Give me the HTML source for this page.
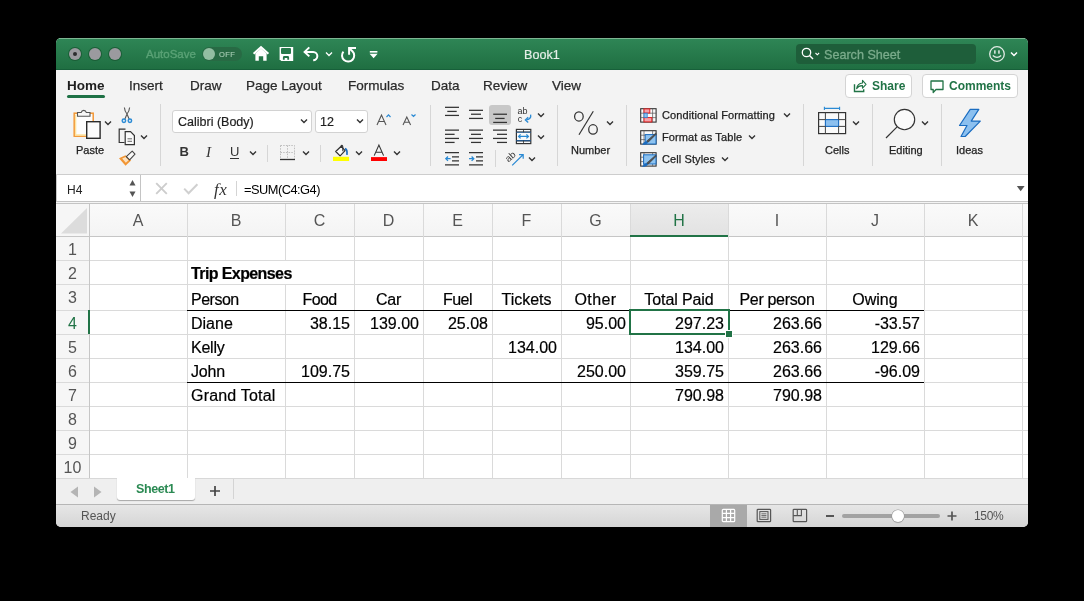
<!DOCTYPE html>
<html><head><meta charset="utf-8"><style>
*{margin:0;padding:0;box-sizing:border-box}
html,body{width:1084px;height:601px;background:#000;overflow:hidden;font-family:"Liberation Sans",sans-serif}
div,svg{position:absolute}
.t{white-space:nowrap;line-height:1}
.tab{top:79px;font-size:13.5px;color:#2a2a2a;-webkit-text-stroke:.25px #2a2a2a;white-space:nowrap;line-height:1}
.sep{width:1px;background:#d6d6d6}
.rt{font-size:11px;color:#222;-webkit-text-stroke:.25px #222;white-space:nowrap;line-height:1}
.hl{height:1px;background:#dadada}
.vl{width:1px;background:#dadada}
.ch{font-size:16px;color:#555;line-height:1;text-align:center;white-space:nowrap}
.rh{left:56px;width:33px;font-size:16px;color:#555;line-height:1;text-align:center}
.c{font-size:16px;color:#000;-webkit-text-stroke:.2px #000;line-height:1;white-space:nowrap}
.r{text-align:right}
.ctr{text-align:center}
</style></head><body>
<div id="root" style="left:0;top:0;width:1084px;height:601px;will-change:transform">
<div style="left:56px;top:38px;width:972px;height:489px;border-radius:5px;overflow:hidden;background:#f3f3f3"></div>
<div style="left:56px;top:38px;width:972px;height:32px;border-radius:5px 5px 0 0;background:linear-gradient(#2f8656,#1f6e41)"></div>
<div style="left:59px;top:38px;width:966px;height:1px;background:#7db592"></div>
<div style="left:56px;top:69px;width:972px;height:1px;background:#17603a"></div>
<div style="left:69px;top:48px;width:12px;height:12px;border-radius:50%;background:#9b9a9f;box-shadow:0 0 0 1px #1b5e37"></div>
<div style="left:89px;top:48px;width:12px;height:12px;border-radius:50%;background:#9b9a9f;box-shadow:0 0 0 1px #1b5e37"></div>
<div style="left:109px;top:48px;width:12px;height:12px;border-radius:50%;background:#9b9a9f;box-shadow:0 0 0 1px #1b5e37"></div>
<div style="left:73px;top:52px;width:4px;height:4px;border-radius:50%;background:#2c2c2e"></div>
<div class="t" style="left:146px;top:49px;font-size:11.5px;color:#5aa276;-webkit-text-stroke:.35px #5aa276">AutoSave</div>
<div style="left:202px;top:47px;width:40px;height:14px;border-radius:7px;background:#286a44"></div>
<div style="left:203px;top:48px;width:12px;height:12px;border-radius:50%;background:#93bea2"></div>
<div class="t" style="left:219px;top:51px;font-size:7.5px;color:#a3c9b0;letter-spacing:.45px;-webkit-text-stroke:.15px #a3c9b0">OFF</div>
<svg style="left:252px;top:45px;" width="19" height="17" viewBox="0 0 19 17"><path d="M1.6 8.8 L9 2.2 L16.4 8.8" fill="none" stroke="#fff" stroke-width="2.1"/><path d="M3.4 8.4 L9 3.6 L14.6 8.4 V15.8 H11.2 V11.2 H6.8 V15.8 H3.4 Z" fill="#fff"/></svg>
<svg style="left:279px;top:46px;" width="15" height="16" viewBox="0 0 15 16"><path d="M0.6 0.9 H14.2 V15 H2.3 L0.6 13.3 Z" fill="#fff"/><rect x="2" y="2" width="10" height="5.9" rx="1" fill="#287b4c"/><path d="M3.9 13.8 V11.4 Q3.9 10 5.3 10 H8.7 Q10.1 10 10.1 11.4 V13.8 H8.3 V12 H5.7 V13.8 Z" fill="#257549"/></svg>
<svg style="left:303px;top:46px;" width="17" height="16" viewBox="0 0 17 16"><path d="M1.8 5.9 H10.2 A4.15 4.15 0 0 1 10.2 14.2" fill="none" stroke="#fff" stroke-width="2"/><path d="M6.3 1.4 L1.6 5.9 L6.3 10.4" fill="none" stroke="#fff" stroke-width="2"/></svg>
<svg style="left:325px;top:51px;" width="8" height="6" viewBox="0 0 8 6"><path d="M1 1.5 L4 4.5 L7 1.5" fill="none" stroke="#fff" stroke-width="1.3"/></svg>
<svg style="left:336px;top:43px;" width="22" height="22" viewBox="0 0 22 22"><path d="M7.43 8.58 A6.1 6.1 0 1 0 16.41 8.19 L13.2 5.2" fill="none" stroke="#fff" stroke-width="2"/><path d="M20 5.1 H13.1 V11.8" fill="none" stroke="#fff" stroke-width="2"/></svg>
<svg style="left:369px;top:50px;" width="9" height="9" viewBox="0 0 9 9"><rect x="0.8" y="1" width="7.6" height="1.6" fill="#fff"/><path d="M0.6 3.8 H8.6 L4.6 8.2 Z" fill="#fff"/></svg>
<div class="t" style="left:524px;top:48.5px;font-size:12.6px;color:#e6efe9;-webkit-text-stroke:.2px #e6efe9">Book1</div>
<div style="left:796px;top:44px;width:180px;height:20px;border-radius:4px;background:#1e5e3a"></div>
<svg style="left:801px;top:47px;" width="19" height="13" viewBox="0 0 19 13"><circle cx="5.5" cy="5.5" r="4.2" fill="none" stroke="#fff" stroke-width="1.3"/><path d="M8.5 8.5 L12 12" stroke="#fff" stroke-width="1.4"/><path d="M14.5 6 L16.3 7.8 L18.1 6" fill="none" stroke="#fff" stroke-width="1.1"/></svg>
<div class="t" style="left:824px;top:49px;font-size:12.6px;color:#7aab8b;-webkit-text-stroke:.3px #7aab8b">Search Sheet</div>
<svg style="left:988px;top:46px;" width="18" height="17" viewBox="0 0 18 17"><circle cx="9" cy="8" r="7.3" fill="none" stroke="#e2ebe5" stroke-width="1.3"/><rect x="6.1" y="4.3" width="1.5" height="3.4" fill="#e2ebe5"/><rect x="10.2" y="4.3" width="1.5" height="3.4" fill="#e2ebe5"/><path d="M4.8 9.6 Q9 13.2 13.2 9.6" fill="none" stroke="#e2ebe5" stroke-width="1.3"/></svg>
<svg style="left:1010px;top:51px;" width="8" height="6" viewBox="0 0 8 6"><path d="M1 1.5 L4 4.5 L7 1.5" fill="none" stroke="#fff" stroke-width="1.5"/></svg>
<div class="tab" style="left:67px;font-weight:bold;color:#1e1e1e;-webkit-text-stroke:0">Home</div>
<div style="left:67px;top:95px;width:38px;height:3px;border-radius:2px;background:#1e7145"></div>
<div class="tab" style="left:129px">Insert</div>
<div class="tab" style="left:190px">Draw</div>
<div class="tab" style="left:246px">Page Layout</div>
<div class="tab" style="left:348px">Formulas</div>
<div class="tab" style="left:431px">Data</div>
<div class="tab" style="left:483px">Review</div>
<div class="tab" style="left:552px">View</div>
<div style="left:845px;top:74px;width:67px;height:24px;border:1px solid #d4d4d4;border-radius:4px;background:#fff"></div>
<svg style="left:852px;top:78px;" width="16" height="16" viewBox="0 0 16 16"><path d="M2.5 6.2 V13.5 H11.7 V11.3" fill="none" stroke="#217346" stroke-width="1.4"/><path d="M4.6 10.6 Q5.4 5.2 10.5 5 V2.4 L14 6.3 L10.5 10.2 V7.6 Q6.6 7.4 4.6 10.6 Z" fill="none" stroke="#217346" stroke-width="1.1" stroke-linejoin="round"/></svg>
<div class="t" style="left:872px;top:80px;font-size:12px;font-weight:bold;color:#217346">Share</div>
<div style="left:922px;top:74px;width:96px;height:24px;border:1px solid #d4d4d4;border-radius:4px;background:#fff"></div>
<svg style="left:930px;top:80px;" width="14" height="14" viewBox="0 0 14 14"><path d="M1 1 H13 V9.5 H6 L3.2 12.5 V9.5 H1 Z" fill="none" stroke="#217346" stroke-width="1.3" stroke-linejoin="round"/></svg>
<div class="t" style="left:949px;top:80px;font-size:12px;font-weight:bold;color:#217346">Comments</div>
<div class="sep" style="left:160px;top:104px;height:62px"></div>
<div class="sep" style="left:430px;top:105px;height:61px"></div>
<div class="sep" style="left:557px;top:105px;height:61px"></div>
<div class="sep" style="left:626px;top:105px;height:61px"></div>
<div class="sep" style="left:803px;top:104px;height:62px"></div>
<div class="sep" style="left:872px;top:104px;height:62px"></div>
<div class="sep" style="left:941px;top:104px;height:62px"></div>
<div class="sep" style="left:267px;top:145px;height:17px"></div>
<div class="sep" style="left:320px;top:145px;height:17px"></div>
<div class="sep" style="left:495px;top:150px;height:17px"></div>
<div class="rt" style="left:76px;top:144.5px">Paste</div>
<div class="rt" style="left:571px;top:144.5px">Number</div>
<div class="rt" style="left:825px;top:144.5px">Cells</div>
<div class="rt" style="left:889px;top:144.5px">Editing</div>
<div class="rt" style="left:956px;top:144.5px">Ideas</div>
<div class="rt" style="left:662px;top:110px;letter-spacing:.1px">Conditional Formatting</div>
<div class="rt" style="left:662px;top:132px;letter-spacing:.1px">Format as Table</div>
<div class="rt" style="left:662px;top:154px;letter-spacing:.1px">Cell Styles</div>
<svg style="left:104px;top:120px;" width="8" height="6" viewBox="0 0 8 6"><path d="M1 1.5 L4 4.5 L7 1.5" fill="none" stroke="#333" stroke-width="1.4"/></svg>
<svg style="left:140px;top:134px;" width="8" height="6" viewBox="0 0 8 6"><path d="M1 1.5 L4 4.5 L7 1.5" fill="none" stroke="#333" stroke-width="1.4"/></svg>
<svg style="left:249px;top:150px;" width="8" height="6" viewBox="0 0 8 6"><path d="M1 1.5 L4 4.5 L7 1.5" fill="none" stroke="#333" stroke-width="1.4"/></svg>
<svg style="left:302px;top:150px;" width="8" height="6" viewBox="0 0 8 6"><path d="M1 1.5 L4 4.5 L7 1.5" fill="none" stroke="#333" stroke-width="1.4"/></svg>
<svg style="left:355px;top:150px;" width="8" height="6" viewBox="0 0 8 6"><path d="M1 1.5 L4 4.5 L7 1.5" fill="none" stroke="#333" stroke-width="1.4"/></svg>
<svg style="left:393px;top:150px;" width="8" height="6" viewBox="0 0 8 6"><path d="M1 1.5 L4 4.5 L7 1.5" fill="none" stroke="#333" stroke-width="1.4"/></svg>
<svg style="left:537px;top:112px;" width="8" height="6" viewBox="0 0 8 6"><path d="M1 1.5 L4 4.5 L7 1.5" fill="none" stroke="#333" stroke-width="1.4"/></svg>
<svg style="left:537px;top:134px;" width="8" height="6" viewBox="0 0 8 6"><path d="M1 1.5 L4 4.5 L7 1.5" fill="none" stroke="#333" stroke-width="1.4"/></svg>
<svg style="left:528px;top:156px;" width="8" height="6" viewBox="0 0 8 6"><path d="M1 1.5 L4 4.5 L7 1.5" fill="none" stroke="#333" stroke-width="1.4"/></svg>
<svg style="left:606px;top:120px;" width="8" height="6" viewBox="0 0 8 6"><path d="M1 1.5 L4 4.5 L7 1.5" fill="none" stroke="#333" stroke-width="1.4"/></svg>
<svg style="left:783px;top:112px;" width="8" height="6" viewBox="0 0 8 6"><path d="M1 1.5 L4 4.5 L7 1.5" fill="none" stroke="#333" stroke-width="1.4"/></svg>
<svg style="left:748px;top:134px;" width="8" height="6" viewBox="0 0 8 6"><path d="M1 1.5 L4 4.5 L7 1.5" fill="none" stroke="#333" stroke-width="1.4"/></svg>
<svg style="left:721px;top:156px;" width="8" height="6" viewBox="0 0 8 6"><path d="M1 1.5 L4 4.5 L7 1.5" fill="none" stroke="#333" stroke-width="1.4"/></svg>
<svg style="left:852px;top:120px;" width="8" height="6" viewBox="0 0 8 6"><path d="M1 1.5 L4 4.5 L7 1.5" fill="none" stroke="#333" stroke-width="1.4"/></svg>
<svg style="left:921px;top:120px;" width="8" height="6" viewBox="0 0 8 6"><path d="M1 1.5 L4 4.5 L7 1.5" fill="none" stroke="#333" stroke-width="1.4"/></svg>
<svg style="left:72px;top:108px;" width="30" height="32" viewBox="0 0 30 32"><rect x="2.2" y="5.2" width="19" height="23" fill="#fdfdfd" stroke="#f29634" stroke-width="1.5"/><path d="M3.6 6.6 V27 H19.8" fill="none" stroke="#fde3a0" stroke-width="1.4"/><path d="M5.5 8.3 V4.5 H9.2 A2.6 2.6 0 0 1 14.3 4.5 H18 V8.3 Z" fill="#f7f7f7" stroke="#555" stroke-width="1.1"/><rect x="14.7" y="13.7" width="13.4" height="16.6" fill="#fbfbfb" stroke="#2a2a2a" stroke-width="1.4"/></svg>
<svg style="left:120px;top:106px;" width="14" height="18" viewBox="0 0 14 18"><path d="M4.4 1.5 Q4.6 5 7 8 L9.2 13.2 M9.6 1.5 Q9.4 5 7 8 L4.8 13.2" fill="none" stroke="#555" stroke-width="1.1"/><circle cx="3.9" cy="14.8" r="1.75" fill="#dbe9f6" stroke="#2a8ad4" stroke-width="1.4"/><circle cx="9.9" cy="14.8" r="1.75" fill="#dbe9f6" stroke="#2a8ad4" stroke-width="1.4"/></svg>
<svg style="left:118px;top:128px;" width="18" height="18" viewBox="0 0 18 18"><path d="M7.5 1.2 H1.2 V14.5 H6.5" fill="none" stroke="#333" stroke-width="1.2"/><path d="M7.2 3.6 H12.5 L16.4 7.5 V16.6 H7.2 Z" fill="#fbfbfb" stroke="#333" stroke-width="1.2"/><path d="M9.5 10.8 H14 M9.5 13.3 H14" stroke="#555" stroke-width="0.9"/></svg>
<svg style="left:118px;top:150px;" width="18" height="17" viewBox="0 0 18 17"><path d="M1 8.3 L7.5 5.3 L13 10.6 L7.5 15.8 Z" fill="#f29634"/><path d="M4.2 8.6 L7.6 7 L10.6 10.2 L7.8 12.8 Z" fill="#fce2c0"/><path d="M8.3 6.6 L14.2 1.2 L17 4.2 L11.6 9.8 Z" fill="#fafafa" stroke="#444" stroke-width="1.1" stroke-linejoin="round"/></svg>
<div style="left:172px;top:110px;width:140px;height:23px;border:1px solid #d2d2d2;border-radius:3px;background:#fff"></div>
<div class="t" style="left:178px;top:116px;font-size:12.5px;color:#1e1e1e;-webkit-text-stroke:.2px #1e1e1e">Calibri (Body)</div>
<div style="left:315px;top:110px;width:53px;height:23px;border:1px solid #d2d2d2;border-radius:3px;background:#fff"></div>
<div class="t" style="left:320px;top:116px;font-size:12.5px;color:#1e1e1e;-webkit-text-stroke:.2px #1e1e1e">12</div>
<svg style="left:300px;top:118px;" width="8" height="6" viewBox="0 0 8 6"><path d="M1 1.5 L4 4.5 L7 1.5" fill="none" stroke="#333" stroke-width="1.4"/></svg>
<svg style="left:356px;top:118px;" width="8" height="6" viewBox="0 0 8 6"><path d="M1 1.5 L4 4.5 L7 1.5" fill="none" stroke="#333" stroke-width="1.4"/></svg>
<div class="t" style="left:179.5px;top:145px;font-size:13px;font-weight:bold;color:#333">B</div>
<div class="t" style="left:206px;top:145px;font-size:15px;font-style:italic;color:#333;font-family:'Liberation Serif',serif">I</div>
<div class="t" style="left:230px;top:145px;font-size:13px;color:#333">U</div>
<div style="left:230px;top:158px;width:9px;height:1px;background:#333"></div>
<svg style="left:279px;top:144px;" width="17" height="17" viewBox="0 0 17 17"><path d="M1.5 1.5 H15.5 V15.5 M1.5 1.5 V15.5 M8.5 1.5 V15.5 M1.5 8.5 H15.5" fill="none" stroke="#b0b0b0" stroke-width="0.8" stroke-dasharray="1.5 1.2"/><path d="M1 15.5 H16" stroke="#333" stroke-width="1.3"/></svg>
<svg style="left:332px;top:143px;" width="18" height="19" viewBox="0 0 18 19"><path d="M3.7 8.5 L9.2 3.2 L13.1 7.6 L8.1 12.9 Z" fill="#fafafa" stroke="#333" stroke-width="1.2" stroke-linejoin="round"/><path d="M9 3.3 Q9.9 1.4 10.7 3.2 L10.9 8.2" fill="none" stroke="#333" stroke-width="1.1"/><path d="M13 5.6 Q15.6 6.4 14.9 11.8" fill="none" stroke="#1a6cc0" stroke-width="1.7"/><rect x="1" y="13.8" width="16.1" height="4.2" fill="#ffff00"/></svg>
<svg style="left:370px;top:143px;" width="18" height="19" viewBox="0 0 18 19"><path d="M4.2 12.6 L8.9 2 L13.6 12.6 M5.7 9.3 H12.1" fill="none" stroke="#333" stroke-width="1.1"/><rect x="1" y="14.1" width="16" height="3.9" fill="#ff0000"/></svg>
<svg style="left:376px;top:113px;" width="16" height="13" viewBox="0 0 16 13"><path d="M1 12 L5.5 2 L10 12 M2.8 8.5 H8.2" fill="none" stroke="#555" stroke-width="1.1"/><path d="M10.5 4 L12.5 1.8 L14.5 4" fill="none" stroke="#2a8ad4" stroke-width="1.2"/></svg>
<svg style="left:402px;top:113px;" width="16" height="13" viewBox="0 0 16 13"><path d="M1 12 L4.8 4 L8.6 12 M2.5 9.2 H7.1" fill="none" stroke="#555" stroke-width="1.1"/><path d="M9.5 1.5 L11.5 3.5 L13.5 1.5" fill="none" stroke="#2a8ad4" stroke-width="1.2"/></svg>
<svg style="left:445px;top:106px;" width="16" height="18" viewBox="0 0 16 18"><rect x="0" y="0.7" width="14" height="1.25" fill="#333"/><rect x="2.3" y="4.8" width="9.399999999999999" height="1.25" fill="#333"/><rect x="0" y="8.8" width="14" height="1.25" fill="#333"/></svg>
<div style="left:489px;top:105px;width:22px;height:20px;border-radius:3px;background:#c8c8c8"></div>
<svg style="left:469px;top:106px;" width="16" height="18" viewBox="0 0 16 18"><rect x="0" y="3.7" width="14" height="1.25" fill="#333"/><rect x="2" y="7.6" width="10" height="1.25" fill="#333"/><rect x="0" y="11.8" width="14" height="1.25" fill="#333"/></svg>
<svg style="left:493px;top:106px;" width="16" height="18" viewBox="0 0 16 18"><rect x="0.2" y="7.6" width="13.8" height="1.25" fill="#333"/><rect x="2.2" y="11.8" width="9.399999999999999" height="1.25" fill="#333"/><rect x="0.2" y="15.8" width="13.8" height="1.25" fill="#333"/></svg>
<svg style="left:445px;top:129px;" width="16" height="18" viewBox="0 0 16 18"><rect x="0" y="0.5" width="14" height="1.25" fill="#333"/><rect x="0" y="4.7" width="9.6" height="1.25" fill="#333"/><rect x="0" y="8.8" width="14" height="1.25" fill="#333"/><rect x="0" y="12.8" width="9.6" height="1.25" fill="#333"/></svg>
<svg style="left:469px;top:129px;" width="16" height="18" viewBox="0 0 16 18"><rect x="0" y="0.5" width="14" height="1.25" fill="#333"/><rect x="2" y="4.7" width="10" height="1.25" fill="#333"/><rect x="0" y="8.8" width="14" height="1.25" fill="#333"/><rect x="2" y="12.8" width="10" height="1.25" fill="#333"/></svg>
<svg style="left:493px;top:129px;" width="16" height="18" viewBox="0 0 16 18"><rect x="0" y="0.5" width="14" height="1.25" fill="#333"/><rect x="4" y="4.7" width="10" height="1.25" fill="#333"/><rect x="0" y="8.8" width="14" height="1.25" fill="#333"/><rect x="4" y="12.8" width="10" height="1.25" fill="#333"/></svg>
<svg style="left:517px;top:106px;" width="18" height="18" viewBox="0 0 18 18"><text x="0.5" y="8.3" font-size="9" fill="#333" font-family="Liberation Sans">ab</text><text x="0.8" y="15.8" font-size="9" fill="#333" font-family="Liberation Sans">c</text><path d="M13.6 8.6 Q14.6 12.8 9.6 13.8" fill="none" stroke="#2a8ad4" stroke-width="1.3"/><path d="M11.2 11.3 L8.4 13.9 L11.2 16.5" fill="none" stroke="#2a8ad4" stroke-width="1.3"/></svg>
<svg style="left:515px;top:128px;" width="17" height="17" viewBox="0 0 17 17"><rect x="1.4" y="1.4" width="14.4" height="14.2" fill="#fafafa" stroke="#333" stroke-width="1.2"/><path d="M1.4 4.3 H15.8 M1.4 12.6 H15.8" stroke="#1a6cc0" stroke-width="1.1"/><path d="M8.5 1.4 V4.3 M8.5 12.6 V15.6 M1.4 3.9 H15.8 M1.4 13 H15.8" stroke="#333" stroke-width="0.8"/><path d="M3.6 8.4 H13.4 M5.6 6.4 L3.6 8.4 L5.6 10.4 M11.4 6.4 L13.4 8.4 L11.4 10.4" fill="none" stroke="#2a8ad4" stroke-width="1.3"/></svg>
<svg style="left:445px;top:151px;" width="15" height="15" viewBox="0 0 15 15"><path d="M0 1.6 H14 M7 5.8 H14 M7 9.9 H14 M0 13.9 H14" stroke="#333" stroke-width="1.2"/><path d="M0.8 7.7 H5.6 M3 5.5 L0.8 7.7 L3 9.9" fill="none" stroke="#2a8ad4" stroke-width="1.3"/></svg>
<svg style="left:469px;top:151px;" width="15" height="15" viewBox="0 0 15 15"><path d="M0 1.6 H14 M7 5.8 H14 M7 9.9 H14 M0 13.9 H14" stroke="#333" stroke-width="1.2"/><path d="M0 7.7 H4.8 M2.6 5.5 L4.8 7.7 L2.6 9.9" fill="none" stroke="#2a8ad4" stroke-width="1.3"/></svg>
<svg style="left:505px;top:149px;" width="20" height="18" viewBox="0 0 20 18"><text x="0" y="0" font-size="9.5" fill="#333" font-family="Liberation Sans" transform="translate(3.6,13.5) rotate(-42)">ab</text><path d="M7.2 16.4 L18 5.8 M14 5.6 H18.2 V9.8" fill="none" stroke="#2a8ad4" stroke-width="1.2"/></svg>
<svg style="left:572px;top:110px;" width="28" height="26" viewBox="0 0 28 26"><ellipse cx="6.9" cy="6.4" rx="4.3" ry="4.6" fill="none" stroke="#333" stroke-width="1.25"/><ellipse cx="21" cy="19.4" rx="4.3" ry="4.7" fill="none" stroke="#333" stroke-width="1.25"/><path d="M21.3 1.3 L7 24.8" stroke="#333" stroke-width="1.2"/></svg>
<svg style="left:639.5px;top:107.5px;" width="17" height="15" viewBox="0 0 17 15"><rect x="0.7" y="0.7" width="15.4" height="13.4" fill="#fafafa" stroke="#333" stroke-width="1.1"/><path d="M0.7 5.2 H16.1 M0.7 9.6 H16.1 M4 0.7 V14.1 M12.6 0.7 V14.1" stroke="#555" stroke-width="0.7"/><rect x="4" y="0.9" width="5.8" height="4.1" fill="#f3a2aa" stroke="#e32222" stroke-width="1"/><rect x="4" y="9.6" width="7.8" height="4.3" fill="#f3a2aa" stroke="#e32222" stroke-width="1"/><rect x="4" y="5.2" width="3.2" height="4.4" fill="#8ec3f0" stroke="#2a7fd0" stroke-width="0.8"/></svg>
<svg style="left:639.5px;top:129.5px;" width="17" height="16" viewBox="0 0 17 16"><rect x="0.7" y="0.7" width="15.4" height="13.4" fill="#fafafa" stroke="#333" stroke-width="1.1"/><path d="M0.7 5.2 H16.1 M0.7 9.6 H16.1 M4 0.7 V14.1 M12.6 0.7 V14.1" stroke="#555" stroke-width="0.7"/><rect x="5.2" y="4.6" width="10.8" height="9.4" fill="#8ec3f0" stroke="#1a6cc0" stroke-width="1"/><path d="M6.6 11.2 L15.6 3.2 L16.4 4 L8 12.4 Z" fill="#555" stroke="#333" stroke-width="0.6"/><path d="M2.2 15 Q3 12 6.4 11 L8 12.6 Q7 14.8 2.2 15 Z" fill="#1a6cc0"/></svg>
<svg style="left:639.5px;top:151.5px;" width="17" height="16" viewBox="0 0 17 16"><rect x="0.7" y="0.7" width="15.4" height="13.4" fill="#fafafa" stroke="#333" stroke-width="1.1"/><path d="M0.7 5.2 H16.1 M0.7 9.6 H16.1 M4 0.7 V14.1 M12.6 0.7 V14.1" stroke="#555" stroke-width="0.7"/><rect x="3.6" y="2.8" width="12.4" height="9.2" fill="#8ec3f0" stroke="#1a6cc0" stroke-width="1"/><path d="M6.6 11.2 L15.6 3.2 L16.4 4 L8 12.4 Z" fill="#555" stroke="#333" stroke-width="0.6"/><path d="M2.2 15 Q3 12 6.4 11 L8 12.6 Q7 14.8 2.2 15 Z" fill="#1a6cc0"/></svg>
<svg style="left:817px;top:106px;" width="30" height="29" viewBox="0 0 30 29"><path d="M7.4 2.4 H22.6 M7.4 0.8 V4 M22.6 0.8 V4" stroke="#2a8ad4" stroke-width="1.1"/><rect x="1.6" y="6.6" width="27" height="21" fill="#fafafa" stroke="#333" stroke-width="1.2"/><rect x="8.4" y="13.6" width="13.2" height="6.8" fill="#8cc0ef" stroke="#1a6cc0" stroke-width="1.1"/><path d="M1.6 13.6 H8.4 M21.6 13.6 H28.6 M1.6 20.4 H8.4 M21.6 20.4 H28.6 M8.4 6.6 V13.6 M8.4 20.4 V27.6 M21.6 6.6 V13.6 M21.6 20.4 V27.6" stroke="#444" stroke-width="1"/></svg>
<svg style="left:884px;top:108px;" width="34" height="32" viewBox="0 0 34 32"><circle cx="20.5" cy="11.5" r="10.2" fill="#fafafa" stroke="#333" stroke-width="1.15"/><path d="M13.3 18.7 L2 30" stroke="#333" stroke-width="1.15"/></svg>
<svg style="left:958px;top:108px;" width="24" height="30" viewBox="0 0 24 30"><path d="M12.2 1.4 H20.8 L13.2 13.1 H22.3 L7.2 28.5 H3 L9 17.5 H1.5 Z" fill="#8cc0ef" stroke="#1a6cc0" stroke-width="1.2" stroke-linejoin="round"/></svg>
<div style="left:56px;top:174px;width:972px;height:1px;background:#cdcdcd"></div>
<div style="left:56px;top:175px;width:972px;height:26px;background:#fff"></div>
<div style="left:56px;top:201px;width:972px;height:1px;background:#c4c4c4"></div>
<div style="left:56px;top:202px;width:972px;height:1px;background:#f4f4f4"></div>
<div style="left:56px;top:203px;width:972px;height:1px;background:#c4c4c4"></div>
<div style="left:140px;top:175px;width:1px;height:26px;background:#c4c4c4"></div>
<div style="left:56px;top:175px;width:1px;height:26px;background:#c8c8c8"></div>
<div style="left:141px;top:175px;width:887px;height:26px;background:#fff"></div>
<div class="t" style="left:67px;top:184px;font-size:12px;color:#222">H4</div>
<svg style="left:129px;top:179px;" width="8" height="20" viewBox="0 0 8 20"><path d="M0.5 6.5 L3.5 1 L6.5 6.5 Z" fill="#555"/><path d="M0.5 12.5 L3.5 18 L6.5 12.5 Z" fill="#555"/></svg>
<svg style="left:155px;top:182px;" width="13" height="13" viewBox="0 0 13 13"><path d="M1.2 1.2 L11.8 11.8 M11.8 1.2 L1.2 11.8" stroke="#cdcdcd" stroke-width="1.9"/></svg>
<svg style="left:183px;top:183px;" width="16" height="12" viewBox="0 0 16 12"><path d="M1.2 5.6 L5.6 10.2 L14.4 1.2" fill="none" stroke="#d0d0d0" stroke-width="2"/></svg>
<div class="t" style="left:214px;top:180.5px;font-size:17px;font-style:italic;color:#333;letter-spacing:.6px;font-family:'Liberation Serif',serif">fx</div>
<div style="left:236px;top:181px;width:1px;height:15px;background:#d4d4d4"></div>
<div class="t" style="left:244px;top:184px;font-size:12.8px;letter-spacing:-.5px;color:#000">=SUM(C4:G4)</div>
<svg style="left:1016px;top:185px;" width="10" height="8" viewBox="0 0 10 8"><path d="M0.8 1 H8.6 L4.7 6.3 Z" fill="#555"/></svg>
<div style="left:56px;top:204px;width:972px;height:274px;background:#fff"></div>
<div style="left:89px;top:204px;width:939px;height:32px;background:linear-gradient(#fafafa,#f4f4f4)"></div>
<div style="left:56px;top:204px;width:33px;height:274px;background:#f6f6f6"></div>
<div style="left:630px;top:204px;width:98px;height:32px;background:linear-gradient(#ececec,#e2e2e2)"></div>
<svg style="left:61px;top:208px;" width="27" height="26" viewBox="0 0 27 26"><path d="M26 0 V25.5 H0 Z" fill="#dcdcdc"/></svg>
<div class="hl" style="left:56px;top:260px;width:972px"></div>
<div class="hl" style="left:56px;top:284px;width:972px"></div>
<div class="hl" style="left:56px;top:310px;width:972px"></div>
<div class="hl" style="left:56px;top:334px;width:972px"></div>
<div class="hl" style="left:56px;top:358px;width:972px"></div>
<div class="hl" style="left:56px;top:382px;width:972px"></div>
<div class="hl" style="left:56px;top:406px;width:972px"></div>
<div class="hl" style="left:56px;top:430px;width:972px"></div>
<div class="hl" style="left:56px;top:454px;width:972px"></div>
<div style="left:56px;top:236px;width:972px;height:1px;background:#c6c6c6"></div>
<div class="vl" style="left:187px;top:204px;height:274px"></div>
<div class="vl" style="left:285px;top:204px;height:274px"></div>
<div class="vl" style="left:354px;top:204px;height:274px"></div>
<div class="vl" style="left:423px;top:204px;height:274px"></div>
<div class="vl" style="left:492px;top:204px;height:274px"></div>
<div class="vl" style="left:561px;top:204px;height:274px"></div>
<div class="vl" style="left:630px;top:204px;height:274px"></div>
<div class="vl" style="left:728px;top:204px;height:274px"></div>
<div class="vl" style="left:826px;top:204px;height:274px"></div>
<div class="vl" style="left:924px;top:204px;height:274px"></div>
<div class="vl" style="left:1022px;top:204px;height:274px"></div>
<div style="left:89px;top:204px;width:1px;height:274px;background:#c6c6c6"></div>
<div style="left:630px;top:235px;width:98px;height:2px;background:#217346"></div>
<div style="left:88px;top:310px;width:2px;height:24px;background:#217346"></div>
<div class="ch" style="left:89px;top:213px;width:98px;color:#555">A</div>
<div class="ch" style="left:187px;top:213px;width:98px;color:#555">B</div>
<div class="ch" style="left:285px;top:213px;width:69px;color:#555">C</div>
<div class="ch" style="left:354px;top:213px;width:69px;color:#555">D</div>
<div class="ch" style="left:423px;top:213px;width:69px;color:#555">E</div>
<div class="ch" style="left:492px;top:213px;width:69px;color:#555">F</div>
<div class="ch" style="left:561px;top:213px;width:69px;color:#555">G</div>
<div class="ch" style="left:630px;top:213px;width:98px;color:#217346">H</div>
<div class="ch" style="left:728px;top:213px;width:98px;color:#555">I</div>
<div class="ch" style="left:826px;top:213px;width:98px;color:#555">J</div>
<div class="ch" style="left:924px;top:213px;width:98px;color:#555">K</div>
<div class="rh" style="top:242px;color:#555">1</div>
<div class="rh" style="top:266px;color:#555">2</div>
<div class="rh" style="top:290px;color:#555">3</div>
<div class="rh" style="top:316px;color:#217346">4</div>
<div class="rh" style="top:340px;color:#555">5</div>
<div class="rh" style="top:364px;color:#555">6</div>
<div class="rh" style="top:388px;color:#555">7</div>
<div class="rh" style="top:412px;color:#555">8</div>
<div class="rh" style="top:436px;color:#555">9</div>
<div class="rh" style="top:460px;color:#555">10</div>
<div style="left:285px;top:261px;width:1px;height:23px;background:#fff"></div>
<div class="c" style="top:266px;letter-spacing:-0.6px;font-weight:bold;left:191px;">Trip Expenses</div>
<div class="c" style="top:292px;letter-spacing:-0.5px;left:191px;">Person</div>
<div class="c" style="top:292px;letter-spacing:-0.65px;left:285px;width:69px;text-align:center;">Food</div>
<div class="c" style="top:292px;letter-spacing:-0.33px;left:354px;width:69px;text-align:center;">Car</div>
<div class="c" style="top:292px;letter-spacing:-0.5px;left:423px;width:69px;text-align:center;">Fuel</div>
<div class="c" style="top:292px;left:492px;width:69px;text-align:center;">Tickets</div>
<div class="c" style="top:292px;letter-spacing:0.4px;left:561px;width:69px;text-align:center;">Other</div>
<div class="c" style="top:292px;letter-spacing:-0.1px;left:630px;width:98px;text-align:center;">Total Paid</div>
<div class="c" style="top:292px;letter-spacing:-0.33px;left:728px;width:98px;text-align:center;">Per person</div>
<div class="c" style="top:292px;left:826px;width:98px;text-align:center;">Owing</div>
<div class="c" style="top:316px;left:191px;">Diane</div>
<div class="c" style="top:316px;left:285px;width:65px;text-align:right;">38.15</div>
<div class="c" style="top:316px;left:354px;width:65px;text-align:right;">139.00</div>
<div class="c" style="top:316px;left:423px;width:65px;text-align:right;">25.08</div>
<div class="c" style="top:316px;left:561px;width:65px;text-align:right;">95.00</div>
<div class="c" style="top:316px;left:630px;width:94px;text-align:right;">297.23</div>
<div class="c" style="top:316px;left:728px;width:94px;text-align:right;">263.66</div>
<div class="c" style="top:316px;left:826px;width:94px;text-align:right;">-33.57</div>
<div class="c" style="top:340px;letter-spacing:-0.25px;left:191px;">Kelly</div>
<div class="c" style="top:340px;left:492px;width:65px;text-align:right;">134.00</div>
<div class="c" style="top:340px;left:630px;width:94px;text-align:right;">134.00</div>
<div class="c" style="top:340px;left:728px;width:94px;text-align:right;">263.66</div>
<div class="c" style="top:340px;left:826px;width:94px;text-align:right;">129.66</div>
<div class="c" style="top:364px;letter-spacing:-0.15px;left:191px;">John</div>
<div class="c" style="top:364px;left:285px;width:65px;text-align:right;">109.75</div>
<div class="c" style="top:364px;left:561px;width:65px;text-align:right;">250.00</div>
<div class="c" style="top:364px;left:630px;width:94px;text-align:right;">359.75</div>
<div class="c" style="top:364px;left:728px;width:94px;text-align:right;">263.66</div>
<div class="c" style="top:364px;left:826px;width:94px;text-align:right;">-96.09</div>
<div class="c" style="top:388px;letter-spacing:0.2px;left:191px;">Grand Total</div>
<div class="c" style="top:388px;left:630px;width:94px;text-align:right;">790.98</div>
<div class="c" style="top:388px;left:728px;width:94px;text-align:right;">790.98</div>
<div style="left:187px;top:310px;width:737px;height:1px;background:#000"></div>
<div style="left:187px;top:382px;width:737px;height:1px;background:#000"></div>
<div style="left:629px;top:309px;width:101px;height:26px;border:2px solid #217346"></div>
<div style="left:726px;top:331px;width:6px;height:6px;background:#217346;box-shadow:0 0 0 1px #fff"></div>
<div style="left:56px;top:478px;width:972px;height:26px;background:#efefef"></div>
<div style="left:56px;top:478px;width:972px;height:1px;background:#d8d8d8"></div>
<svg style="left:70px;top:486px;" width="9" height="12" viewBox="0 0 9 12"><path d="M8 0.5 V11.5 L0.5 6 Z" fill="#b4b4b4"/></svg>
<svg style="left:93px;top:486px;" width="9" height="12" viewBox="0 0 9 12"><path d="M1 0.5 V11.5 L8.5 6 Z" fill="#b4b4b4"/></svg>
<div style="left:117px;top:478px;width:78px;height:22px;background:#fff;border-radius:0 0 3px 3px;box-shadow:0 1px 1px rgba(0,0,0,.3)"></div>
<div class="t" style="left:136px;top:483px;font-size:12.5px;letter-spacing:-.4px;font-weight:bold;color:#2b8a53">Sheet1</div>
<svg style="left:209px;top:485px;" width="12" height="12" viewBox="0 0 12 12"><path d="M6 1 V11 M1 6 H11" stroke="#444" stroke-width="1.7"/></svg>
<div style="left:233px;top:479px;width:1px;height:20px;background:#d4d4d4"></div>
<div style="left:56px;top:504px;width:972px;height:23px;border-radius:0 0 5px 5px;background:linear-gradient(#e7e7e7,#d5d5d5)"></div>
<div style="left:56px;top:504px;width:972px;height:1px;background:#b6b6b6"></div>
<div class="t" style="left:81px;top:510px;font-size:12px;color:#555">Ready</div>
<div style="left:710px;top:505px;width:37px;height:22px;background:#a9a9a9"></div>
<svg style="left:721px;top:508px;" width="15" height="15" viewBox="0 0 15 15"><rect x="1.3" y="1.3" width="12.4" height="12.4" rx="1" fill="none" stroke="#fff" stroke-width="1.2"/><path d="M5.4 1.3 V13.7 M9.6 1.3 V13.7 M1.3 5.4 H13.7 M1.3 9.6 H13.7" stroke="#fff" stroke-width="1.2"/></svg>
<svg style="left:756px;top:508px;" width="16" height="15" viewBox="0 0 16 15"><rect x="1.2" y="1.3" width="13.4" height="12.4" rx="0.8" fill="none" stroke="#555" stroke-width="1.2"/><rect x="3.8" y="3.6" width="8.2" height="7.8" fill="none" stroke="#555" stroke-width="1"/><path d="M5.4 5.8 H10.4 M5.4 7.5 H10.4 M5.4 9.2 H10.4" stroke="#555" stroke-width="0.8"/></svg>
<svg style="left:792px;top:508px;" width="16" height="15" viewBox="0 0 16 15"><rect x="1.2" y="1.3" width="13.4" height="12.4" rx="0.8" fill="none" stroke="#555" stroke-width="1.2"/><path d="M1.2 7.6 H9.4 V1.3 M5.3 1.3 V7.6" fill="none" stroke="#555" stroke-width="1.1"/></svg>
<div style="left:826px;top:515px;width:8px;height:2px;background:#555"></div>
<div style="left:842px;top:514px;width:98px;height:4px;border-radius:2px;background:#a2a2a2"></div>
<div style="left:892px;top:510px;width:12px;height:12px;border-radius:50%;background:#fff;box-shadow:0 0 0 .6px #9a9a9a,0 1px 1px rgba(0,0,0,.2)"></div>
<svg style="left:947px;top:511px;" width="10" height="10" viewBox="0 0 10 10"><path d="M5 0.5 V9.5 M0.5 5 H9.5" stroke="#555" stroke-width="1.7"/></svg>
<div class="t" style="left:974px;top:510px;font-size:12px;letter-spacing:-.3px;color:#555">150%</div>
</div>
</body></html>
